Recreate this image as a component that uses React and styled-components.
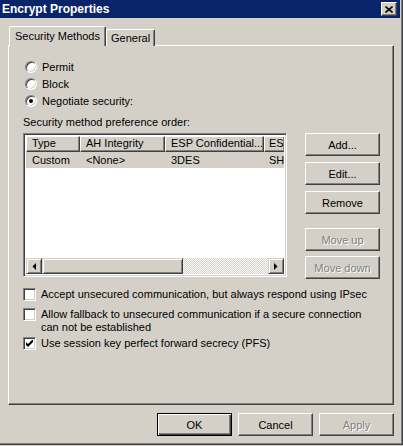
import React from "react";
import styled, { createGlobalStyle, css } from "styled-components";

const Global = createGlobalStyle`
  html, body { margin: 0; padding: 0; background: #d4d0c8; }
  body {
    font-family: "Liberation Sans", Arial, sans-serif;
    font-size: 11px;
    color: #000;
  }
  * { box-sizing: border-box; }
`;

const Window = styled.div`
  width: 403px;
  height: 445px;
  background: #d4d0c8;
  border-right: 1px solid #404040;
  border-bottom: 1px solid #404040;
  box-shadow: inset -1px -1px 0 #808080;
  display: flex;
  flex-direction: column;
  overflow: hidden;
`;

const TitleBar = styled.div`
  height: 18px;
  margin-right: 2px;
  background: #0a246a;
  color: #fff;
  font-weight: bold;
  font-size: 12px;
  display: flex;
  align-items: center;
  justify-content: space-between;
  padding: 0 3px 0 2px;
`;

const CloseBtn = styled.div`
  width: 16px;
  height: 14px;
  background: #d4d0c8;
  border: 1px solid;
  border-color: #fff #404040 #404040 #fff;
  box-shadow: inset -1px -1px 0 #808080;
  display: flex;
  align-items: center;
  justify-content: center;
`;

const Body = styled.div`
  flex: 1;
  display: flex;
  flex-direction: column;
  padding: 8px 8px 0 8px;
`;

const TabRow = styled.div`
  display: flex;
  align-items: flex-end;
  height: 20px;
  margin-bottom: -1px;
  padding-left: 1px;
  position: relative;
  z-index: 1;
`;

const Tab = styled.div`
  height: ${(p) => (p.active ? "20px" : "17px")};
  padding: 0 ${(p) => (p.active ? "5px" : "4px")};
  background: #d4d0c8;
  border-top: 1px solid #fff;
  border-left: 1px solid #fff;
  border-right: 1px solid #404040;
  box-shadow: inset -1px 0 0 #808080;
  border-radius: 2px 2px 0 0;
  display: flex;
  align-items: ${(p) => (p.active ? "flex-start" : "center")};
  padding-top: ${(p) => (p.active ? "3px" : "0")};
  font-size: 11px;
  white-space: nowrap;
`;

const Panel = styled.div`
  width: 386px;
  height: 360px;
  border: 1px solid;
  border-color: #fff #404040 #404040 #fff;
  box-shadow: inset -1px -1px 0 #808080;
  padding: 12px 0 0 14px;
  display: flex;
  flex-direction: column;
`;

const RadioRow = styled.label`
  height: 17px;
  display: flex;
  align-items: center;
  gap: 5px;
  padding-left: 2px;
`;

const RadioDot = styled.span`
  width: 12px;
  height: 12px;
  border-radius: 50%;
  background: #fff;
  border: 1px solid;
  border-color: #808080 #fff #fff #808080;
  box-shadow: inset 1px 1px 0 #404040, inset -1px -1px 0 #d4d0c8;
  display: flex;
  align-items: center;
  justify-content: center;
  &::after {
    content: "";
    width: 4px;
    height: 4px;
    border-radius: 50%;
    background: ${(p) => (p.checked ? "#000" : "transparent")};
  }
`;

const Label = styled.div`
  margin-top: 7px;
  height: 13px;
  line-height: 13px;
`;

const ListArea = styled.div`
  display: flex;
  margin-top: 4px;
  gap: 18px;
`;

const ListView = styled.div`
  width: 264px;
  height: 144px;
  border: 1px solid;
  border-color: #808080 #fff #fff #808080;
  box-shadow: inset 1px 1px 0 #404040, inset -1px -1px 0 #d4d0c8;
  padding: 2px;
  display: flex;
  flex-direction: column;
  background: #fff;
`;

const HeaderRow = styled.div`
  display: flex;
  height: 16px;
  overflow: hidden;
  flex-shrink: 0;
`;

const HeaderCell = styled.div`
  width: ${(p) => (p.w ? `${p.w}px` : "auto")};
  flex: ${(p) => (p.w ? "0 0 auto" : "1")};
  background: #d4d0c8;
  border: 1px solid;
  border-color: #fff #404040 #404040 #fff;
  box-shadow: inset -1px -1px 0 #808080;
  border-right-width: ${(p) => (p.w ? "1px" : "0")};
  padding-left: ${(p) => (p.w ? "5px" : "4px")};
  line-height: 13px;
  white-space: nowrap;
  overflow: hidden;
`;

const DataRow = styled.div`
  display: flex;
  height: 16px;
  background: #d4d0c8;
  overflow: hidden;
  flex-shrink: 0;
`;

const DataCell = styled.div`
  width: ${(p) => (p.w ? `${p.w}px` : "auto")};
  flex: ${(p) => (p.w ? "0 0 auto" : "1")};
  padding-left: ${(p) => (p.w ? "6px" : "5px")};
  line-height: 16px;
  white-space: nowrap;
  overflow: hidden;
`;

const ListFill = styled.div`
  flex: 1;
  background: #fff;
`;

const HScroll = styled.div`
  height: 16px;
  display: flex;
  flex-shrink: 0;
`;

const ScrollBtn = styled.div`
  width: 16px;
  height: 16px;
  background: #d4d0c8;
  border: 1px solid;
  border-color: #d4d0c8 #404040 #404040 #d4d0c8;
  box-shadow: inset 1px 1px 0 #fff, inset -1px -1px 0 #808080;
  display: flex;
  align-items: center;
  justify-content: center;
  flex-shrink: 0;
`;

const Thumb = styled(ScrollBtn)`
  width: 141px;
`;

const Track = styled.div`
  flex: 1;
  background-color: #d4d0c8;
  background-image: repeating-conic-gradient(#fff 0 25%, #d4d0c8 0 50%);
  background-size: 2px 2px;
`;

const SideButtons = styled.div`
  display: flex;
  flex-direction: column;
`;

const Button = styled.button`
  width: 75px;
  height: 23px;
  padding: 0;
  font-family: "Liberation Sans", Arial, sans-serif;
  font-size: 11px;
  background: #d4d0c8;
  color: #000;
  border: 1px solid;
  border-color: #fff #404040 #404040 #fff;
  box-shadow: inset -1px -1px 0 #808080;
  margin-top: ${(p) => p.mt || 0}px;
  &:disabled {
    color: #808080;
    text-shadow: 1px 1px 0 #fff;
  }
  ${(p) =>
    p.$default &&
    css`
      border-color: #000;
      box-shadow: inset 1px 1px 0 #fff, inset -1px -1px 0 #404040,
        inset -2px -2px 0 #808080;
    `}
`;

const CheckRow = styled.label`
  display: flex;
  align-items: flex-start;
  gap: 5px;
  line-height: 13px;
  margin-top: ${(p) => p.mt}px;
`;

const CheckBox = styled.span`
  width: 13px;
  height: 13px;
  flex-shrink: 0;
  background: #fff;
  border: 1px solid;
  border-color: #808080 #fff #fff #808080;
  box-shadow: inset 1px 1px 0 #404040, inset -1px -1px 0 #d4d0c8;
  display: flex;
  align-items: center;
  justify-content: center;
`;

const Footer = styled.div`
  display: flex;
  justify-content: flex-end;
  gap: 6px;
  margin-top: 8px;
  padding-right: 0;
`;

const Arrow = ({ dir }) => (
  <svg width="4" height="7" viewBox="0 0 4 7">
    <polygon
      points={dir === "left" ? "4,0 4,7 0.5,3.5" : "0,0 0,7 3.5,3.5"}
      fill="#000"
    />
  </svg>
);

const Check = () => (
  <svg width="7" height="7" viewBox="0 0 7 7">
    <polygon points="0,2 2,4 7,-1 7,2 2,7 0,5" fill="#000" />
  </svg>
);

const columns = [
  { w: 54, h: "Type", d: "Custom" },
  { w: 85, h: "AH Integrity", d: "<None>" },
  { w: 99, h: "ESP Confidential...", d: "3DES" },
  { w: 0, h: "ES", d: "SH" },
];

export default function App() {
  return (
    <>
      <Global />
      <Window>
        <TitleBar>
          <span>Encrypt Properties</span>
          <CloseBtn>
            <svg width="8" height="7" viewBox="0 0 8 7">
              <path d="M0.5 0.5 L7.5 6.5 M7.5 0.5 L0.5 6.5" stroke="#000" strokeWidth="1.6" />
            </svg>
          </CloseBtn>
        </TitleBar>
        <Body>
          <TabRow>
            <Tab active>Security Methods</Tab>
            <Tab>General</Tab>
          </TabRow>
          <Panel>
            <RadioRow>
              <RadioDot />
              Permit
            </RadioRow>
            <RadioRow>
              <RadioDot />
              Block
            </RadioRow>
            <RadioRow>
              <RadioDot checked />
              Negotiate security:
            </RadioRow>
            <Label>Security method preference order:</Label>
            <ListArea>
              <ListView>
                <HeaderRow>
                  {columns.map((c) => (
                    <HeaderCell key={c.h} w={c.w}>
                      {c.h}
                    </HeaderCell>
                  ))}
                </HeaderRow>
                <DataRow>
                  {columns.map((c) => (
                    <DataCell key={c.h} w={c.w}>
                      {c.d}
                    </DataCell>
                  ))}
                </DataRow>
                <ListFill />
                <HScroll>
                  <ScrollBtn>
                    <Arrow dir="left" />
                  </ScrollBtn>
                  <Thumb />
                  <Track />
                  <ScrollBtn>
                    <Arrow dir="right" />
                  </ScrollBtn>
                </HScroll>
              </ListView>
              <SideButtons>
                <Button>Add...</Button>
                <Button mt={6}>Edit...</Button>
                <Button mt={6}>Remove</Button>
                <Button mt={14} disabled>
                  Move up
                </Button>
                <Button mt={5} disabled>
                  Move down
                </Button>
              </SideButtons>
            </ListArea>
            <CheckRow mt={9}>
              <CheckBox />
              <span>Accept unsecured communication, but always respond using IPsec</span>
            </CheckRow>
            <CheckRow mt={7}>
              <CheckBox />
              <span>
                Allow fallback to unsecured communication if a secure connection
                <br />
                can not be established
              </span>
            </CheckRow>
            <CheckRow mt={3}>
              <CheckBox>
                <Check />
              </CheckBox>
              <span>Use session key perfect forward secrecy (PFS)</span>
            </CheckRow>
          </Panel>
          <Footer>
            <Button $default>OK</Button>
            <Button>Cancel</Button>
            <Button disabled>Apply</Button>
          </Footer>
        </Body>
      </Window>
    </>
  );
}
